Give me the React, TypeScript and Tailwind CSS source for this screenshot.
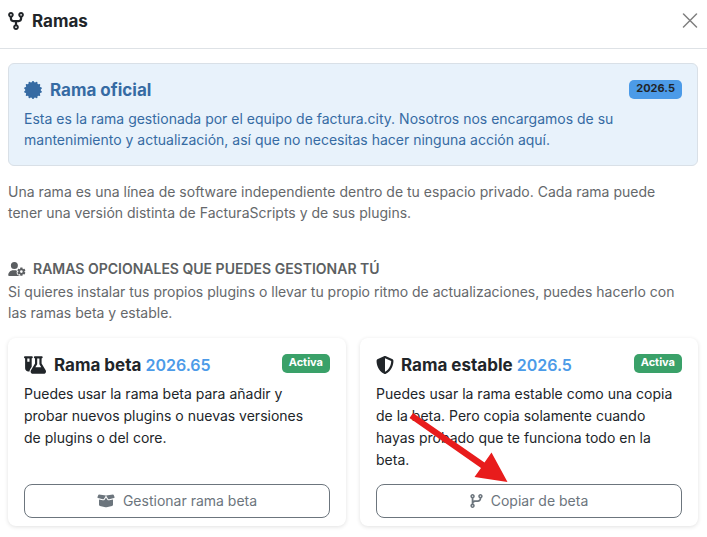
import type { ReactNode } from "react";
import {
  FaCodeBranch,
  FaCodeFork,
  FaFlaskVial,
  FaShieldHalved,
  FaUserGear,
} from "react-icons/fa6";

type BranchCardProps = {
  icon: ReactNode;
  name: string;
  version: string;
  action: ReactNode;
  children: ReactNode;
};

function SealIcon() {
  const teeth = 14;
  const points = Array.from({ length: teeth * 4 }, (_, i) => {
    const radius = i % 4 < 2 ? 9 : 7.8;
    const angle = ((i - 0.5) / (teeth * 4)) * Math.PI * 2;
    return `${(9 + radius * Math.sin(angle)).toFixed(2)},${(9 - radius * Math.cos(angle)).toFixed(2)}`;
  }).join(" ");
  return (
    <svg className="size-[18px]" viewBox="0 0 18 18" fill="currentColor" aria-hidden="true">
      <polygon points={points} />
    </svg>
  );
}

function OpenBoxIcon() {
  return (
    <svg className="h-[14px] w-[18px]" viewBox="0 0 18 14" fill="currentColor" aria-hidden="true">
      <path d="M2 0.6 L9 1.6 L6.9 4.9 Q6.5 5.4 5.8 5.3 L1 4.1 Q0.2 3.8 0.5 3 L1.3 1.1 Q1.5 0.6 2 0.6 Z" />
      <path d="M16 0.6 L9 1.6 L11.1 4.9 Q11.5 5.4 12.2 5.3 L17 4.1 Q17.8 3.8 17.5 3 L16.7 1.1 Q16.5 0.6 16 0.6 Z" />
      <path d="M2 5.4 L5.6 6.3 Q7 6.6 7.8 5.4 L9 3.5 L10.2 5.4 Q11 6.6 12.4 6.3 L16 5.4 V10.8 Q16 11.8 15 12 L9.6 13.2 Q9 13.3 8.4 13.2 L3 12 Q2 11.8 2 10.8 Z" />
    </svg>
  );
}

function BranchCard({ icon, name, version, action, children }: BranchCardProps) {
  return (
    <article className="flex flex-col rounded-lg bg-white p-4 pb-2 shadow-[0_1px_4px_rgba(0,0,0,0.12)]">
      <div className="flex items-start justify-between">
        <h3 className="flex items-center text-[17px] leading-[22px] font-bold">
          {icon}
          <span>
            {name} <span className="text-[16px] font-semibold text-[#4c9be8]">{version}</span>
          </span>
        </h3>
        <span className="rounded-[5px] bg-[#3aa169] px-[7px] pb-[2px] text-[11px] leading-[17px] font-bold text-white">
          Activa
        </span>
      </div>
      <p className="mt-[7px] mb-[13px] text-[#212529]">{children}</p>
      <button
        type="button"
        className="mt-auto flex h-[34px] items-center justify-center gap-2 rounded-lg border border-[#6c757d] text-[#6c757d]"
      >
        {action}
      </button>
    </article>
  );
}

function Arrow() {
  return (
    <svg
      className="pointer-events-none absolute top-[73px] right-[189px]"
      width="100"
      height="72"
      viewBox="0 0 100 72"
      aria-hidden="true"
    >
      <path
        d="M4 2 L75.5 51.5 L82.5 41.5 L98.5 71 L65.5 66 L72 57 L0.5 7 Z"
        fill="#e81c1c"
      />
    </svg>
  );
}

export default function App() {
  return (
    <div className="bg-white font-['Inter',sans-serif] text-[14px] leading-[22px] text-[#212529]">
      <header className="flex h-[49px] items-center justify-between border-b border-[#dee2e6] pr-[9px] pb-[7px] pl-2">
        <h1 className="flex items-center gap-2 text-[17px] leading-[22px] font-bold">
          <FaCodeFork className="h-[18px] w-4" />
          Ramas
        </h1>
        <button type="button" aria-label="Cerrar" className="text-[#808080]">
          <svg width="16" height="16" viewBox="0 0 16 16" fill="none" stroke="currentColor" strokeWidth="1.5" strokeLinecap="round">
            <path d="M1.5 1 L14.5 14 M14.5 1 L1.5 14" />
          </svg>
        </button>
      </header>

      <main className="pt-[14px] pr-[9px] pb-3 pl-2">
        <section className="rounded-md border border-[#d9e0e7] bg-[#e8f2fb] p-[15px] text-[#366ba3]">
          <div className="flex items-start justify-between">
            <h2 className="flex items-center gap-2 text-[17px] leading-[22px] font-bold">
              <SealIcon />
              Rama oficial
            </h2>
            <span className="mt-px rounded-[5px] bg-[#4c9be8] px-[7px] pb-[2px] text-[11px] leading-[17px] font-bold text-[#212529]">
              2026.5
            </span>
          </div>
          <p className="mt-[7px] leading-[21px]">
            Esta es la rama gestionada por el equipo de factura.city. Nosotros nos encargamos de su
            <br />
            mantenimiento y actualización, así que no necesitas hacer ninguna acción aquí.
          </p>
        </section>

        <p className="mt-[15px] leading-[21px] text-[#65686b]">
          Una rama es una línea de software independiente dentro de tu espacio privado. Cada rama puede
          <br />
          tener una versión distinta de FacturaScripts y de sus plugins.
        </p>

        <section className="mt-[35px]">
          <h2 className="flex items-center gap-[7px] leading-[22px] font-semibold text-[#5c5f62] uppercase">
            <FaUserGear className="h-[14px] w-[18px]" />
            Ramas opcionales que puedes gestionar tú
          </h2>
          <p className="mt-px leading-[21px] text-[#65686b]">
            Si quieres instalar tus propios plugins o llevar tu propio ritmo de actualizaciones, puedes
            hacerlo con
            <br />
            las ramas beta y estable.
          </p>

          <div className="relative mt-[15px] grid grid-cols-2 gap-[14px]">
            <BranchCard
              icon={<FaFlaskVial className="mr-2 h-[18px] w-[22px]" />}
              name="Rama beta"
              version="2026.65"
              action={
                <>
                  <OpenBoxIcon />
                  Gestionar rama beta
                </>
              }
            >
              Puedes usar la rama beta para añadir y
              <br />
              probar nuevos plugins o nuevas versiones
              <br />
              de plugins o del core.
            </BranchCard>
            <BranchCard
              icon={<FaShieldHalved className="mr-[7px] size-[18px]" />}
              name="Rama estable"
              version="2026.5"
              action={
                <>
                  <FaCodeBranch className="h-[14px] w-[13px]" />
                  Copiar de beta
                </>
              }
            >
              Puedes usar la rama estable como una copia de la beta. Pero copia solamente cuando hayas
              probado que te funciona todo en la beta.
            </BranchCard>
            <Arrow />
          </div>
        </section>
      </main>
    </div>
  );
}
